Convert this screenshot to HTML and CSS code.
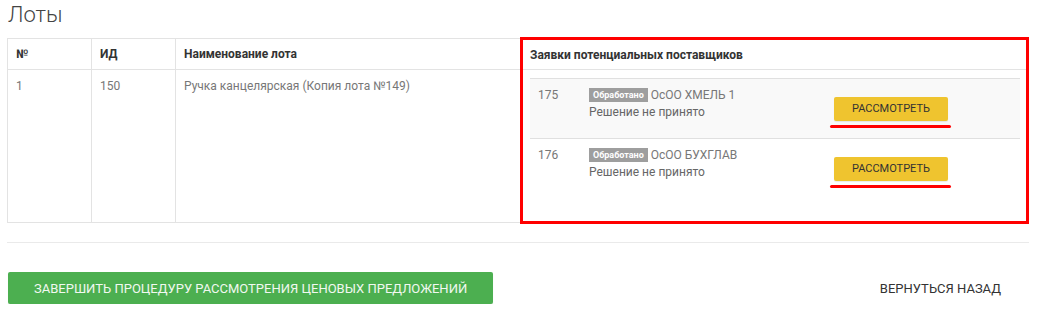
FILE: index.html
```html
<!DOCTYPE html>
<html lang="ru">
<head>
    <meta charset="UTF-8">
    <meta name="viewport" content="width=device-width, initial-scale=1.0">
    <title>Лоты</title>
    <link rel="stylesheet" href="styles.css">
</head>
<body>
    <div class="page">
        <h2 class="title">Лоты</h2>

        <table class="lots">
            <thead>
                <tr>
                    <th class="col-num">№</th>
                    <th class="col-id">ИД</th>
                    <th class="col-name">Наименование лота</th>
                    <th class="col-offers marked-top">Заявки потенциальных поставщиков</th>
                </tr>
            </thead>
            <tbody>
                <tr>
                    <td>1</td>
                    <td>150</td>
                    <td>Ручка канцелярская (Копия лота №149)</td>
                    <td class="marked-bottom">
                        <table class="offers">
                            <tr class="odd">
                                <td class="offer-id">175</td>
                                <td class="offer-info">
                                    <div><span class="badge">Обработано</span> ОсОО ХМЕЛЬ 1</div>
                                    <div class="decision">Решение не принято</div>
                                </td>
                                <td class="offer-action">
                                    <button class="btn-review">Рассмотреть</button>
                                </td>
                            </tr>
                            <tr>
                                <td class="offer-id">176</td>
                                <td class="offer-info">
                                    <div><span class="badge">Обработано</span> ОсОО БУХГЛАВ</div>
                                    <div class="decision">Решение не принято</div>
                                </td>
                                <td class="offer-action">
                                    <button class="btn-review">Рассмотреть</button>
                                </td>
                            </tr>
                        </table>
                    </td>
                </tr>
            </tbody>
        </table>

        <hr class="divider">

        <div class="actions">
            <button class="btn-finish">Завершить процедуру рассмотрения ценовых предложений</button>
            <button class="btn-back">Вернуться назад</button>
        </div>
    </div>
</body>
</html>
```

FILE: styles.css
```css
* {
    box-sizing: border-box;
}

body {
    margin: 0;
    background: #fff;
    font-family: 'Roboto', 'Liberation Sans', sans-serif;
    font-size: 12px;
    color: #555;
}

.page {
    width: 1029px;
    padding-left: 7px;
}

.title {
    margin: 0 0 7px 1px;
    font-size: 22px;
    font-weight: 300;
    line-height: 30px;
    color: #444;
}

.lots {
    width: 100%;
    border-collapse: collapse;
    border: 1px solid #e3e3e3;
}

.lots th,
.lots > tbody > tr > td {
    border: 1px solid #e3e3e3;
    padding: 6px 8px 5px;
    line-height: 18px;
    text-align: left;
    vertical-align: top;
}

.lots th {
    font-weight: 700;
    color: #333;
}

.lots > tbody > tr > td {
    color: #777;
    padding-top: 7px;
}

.col-num { width: 84px; }
.col-id { width: 84px; }
.col-name { width: 346px; }

.lots th.marked-top {
    border: 3px solid #ff0000;
    border-bottom: 1px solid #e3e3e3;
    padding-left: 7px;
}

.lots > tbody > tr > td.marked-bottom {
    border: 3px solid #ff0000;
    border-top: none;
    padding: 8px 6px 23px 7px;
}

.offers {
    width: 100%;
    border-collapse: collapse;
}

.offers td {
    border-top: 1px solid #e0e0e0;
    padding: 7px 8px 18px;
    line-height: 18px;
    vertical-align: top;
    color: #777;
}

.offers tr.odd td {
    background: #f9f9f9;
}

.offer-id {
    width: 51px;
}

.offer-info {
    width: 245px;
}

.decision {
    color: #666;
    line-height: 16px;
}

.badge {
    display: inline-block;
    background: #9e9e9e;
    color: #fff;
    font-size: 9px;
    font-weight: 700;
    line-height: 14px;
    padding: 0 4px;
    vertical-align: 1px;
}

.offers td.offer-action {
    vertical-align: middle;
    padding-top: 4px;
    padding-bottom: 4px;
}

.btn-review {
    position: relative;
    width: 114px;
    height: 24px;
    border: none;
    border-radius: 2px;
    background: #efc42f;
    color: #333;
    font-family: inherit;
    font-size: 11px;
    text-transform: uppercase;
    box-shadow: 0 1px 1px rgba(0, 0, 0, 0.08);
    cursor: pointer;
}

/* red annotation line under the review button */
.btn-review::after {
    content: '';
    position: absolute;
    left: -4px;
    right: -3px;
    bottom: -7px;
    height: 3px;
    border-radius: 2px;
    background: #ff0000;
}

.divider {
    margin: 18px 0 29px;
    border: none;
    border-top: 1px solid #eaeaea;
}

.actions {
    display: flex;
    justify-content: space-between;
    align-items: center;
    margin-left: 1px;
}

.actions button {
    height: 32px;
    border: none;
    border-radius: 2px;
    font-family: inherit;
    font-size: 13px;
    text-transform: uppercase;
    cursor: pointer;
}

.btn-finish {
    padding: 0 26px;
    background: #4caf50;
    color: #f1f8f1;
    box-shadow: 0 1px 1px rgba(0, 0, 0, 0.1);
}

.btn-back {
    padding: 0 28px;
    background: transparent;
    color: #333;
}
```
